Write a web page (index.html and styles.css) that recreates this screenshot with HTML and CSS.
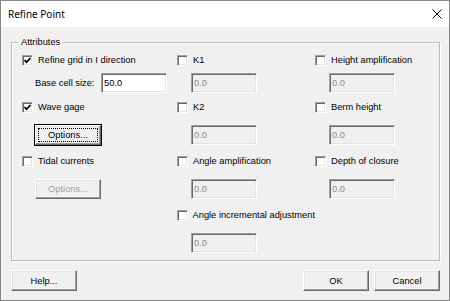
FILE: index.html
```html
<!DOCTYPE html>
<html lang="en">
<head>
    <meta charset="UTF-8">
    <title>Refine Point</title>
    <link rel="stylesheet" href="styles.css">
</head>
<body>
    <div class="window">
        <div class="titlebar">
            <span class="title">Refine Point</span>
            <svg class="close" width="10" height="10" viewBox="0 0 10 10">
                <path d="M0.5 0.5 L9.5 9.5 M9.5 0.5 L0.5 9.5" stroke="#000" stroke-width="1" fill="none"/>
            </svg>
        </div>

        <div class="client">
            <fieldset class="group">
                <legend>Attributes</legend>
                <div class="grid">
                    <!-- row 1 -->
                    <label class="check"><span class="box checked"><svg width="9" height="9" viewBox="0 0 9 9"><path d="M1.5 4 L3.5 6.2 L7.5 2" stroke="#000" stroke-width="1.7" fill="none"/></svg></span>Refine grid in I direction</label>
                    <label class="check"><span class="box"></span>K1</label>
                    <label class="check"><span class="box"></span>Height amplification</label>

                    <!-- row 2 -->
                    <div class="field"><span class="field-label">Base cell size:</span><input class="edit" type="text" value="50.0"></div>
                    <input class="edit indent" type="text" value="0.0" disabled>
                    <input class="edit indent" type="text" value="0.0" disabled>

                    <!-- row 3 -->
                    <label class="check"><span class="box checked"><svg width="9" height="9" viewBox="0 0 9 9"><path d="M1.5 4 L3.5 6.2 L7.5 2" stroke="#000" stroke-width="1.7" fill="none"/></svg></span>Wave gage</label>
                    <label class="check"><span class="box"></span>K2</label>
                    <label class="check"><span class="box"></span>Berm height</label>

                    <!-- row 4 -->
                    <button class="btn small default"><span class="focus">Options...</span></button>
                    <input class="edit indent" type="text" value="0.0" disabled>
                    <input class="edit indent" type="text" value="0.0" disabled>

                    <!-- row 5 -->
                    <label class="check"><span class="box"></span>Tidal currents</label>
                    <label class="check"><span class="box"></span>Angle amplification</label>
                    <label class="check"><span class="box"></span>Depth of closure</label>

                    <!-- row 6 -->
                    <button class="btn small" disabled>Options...</button>
                    <input class="edit indent" type="text" value="0.0" disabled>
                    <input class="edit indent" type="text" value="0.0" disabled>

                    <!-- row 7 -->
                    <div></div>
                    <label class="check"><span class="box"></span>Angle incremental adjustment</label>
                    <div></div>

                    <!-- row 8 -->
                    <div></div>
                    <input class="edit indent" type="text" value="0.0" disabled>
                    <div></div>
                </div>
            </fieldset>

            <div class="footer">
                <button class="btn">Help...</button>
                <div class="spacer"></div>
                <button class="btn">OK</button>
                <button class="btn">Cancel</button>
            </div>
        </div>
    </div>
</body>
</html>
```

FILE: styles.css
```css
body {
    margin: 0;
    padding: 0;
    font-family: 'Liberation Sans', Arial, sans-serif;
    font-size: 9.3px;
    color: #000;
}

.window {
    width: 450px;
    height: 301px;
    box-sizing: border-box;
    border: 1px solid #858585;
    background-color: #f0f0f0;
    display: flex;
    flex-direction: column;
}

.titlebar {
    height: 26px;
    background-color: #fff;
    display: flex;
    align-items: center;
    padding: 0 7px 0 7px;
    flex-shrink: 0;
}

.title {
    font-family: 'Noto Sans', 'Open Sans', sans-serif;
    font-size: 10px;
    flex: 1;
}

.close {
    display: block;
}

.client {
    flex: 1;
    display: flex;
    flex-direction: column;
    padding: 9px 9px 0 10px;
}

.group {
    margin: 0;
    height: 225px;
    box-sizing: border-box;
    padding: 5px 0 0 10px;
    border: 1px solid #bcbcbc;
    box-shadow: inset 1px 1px 0 #fff, 1px 1px 0 #fff;
}

.group legend {
    margin-left: -4px;
    padding: 0 3px;
    line-height: 12px;
}

.grid {
    display: grid;
    grid-template-columns: 155px 138px 1fr;
    grid-template-rows: 20px 27px 25px 29px 25px 29px 25px 20px;
    align-items: start;
}

.check {
    display: flex;
    align-items: center;
    height: 14px;
    white-space: nowrap;
}

.box {
    width: 11px;
    height: 11px;
    box-sizing: border-box;
    background-color: #fff;
    border: 1px solid;
    border-color: #a0a0a0 #fff #fff #a0a0a0;
    box-shadow: inset 1px 1px 0 #696969, inset -1px -1px 0 #e3e3e3;
    margin-right: 5px;
    display: flex;
    align-items: center;
    justify-content: center;
}

.box svg {
    display: block;
}

.field {
    display: flex;
    align-items: center;
    padding-left: 13px;
}

.field-label {
    width: 66px;
}

.edit {
    width: 66px;
    height: 20px;
    box-sizing: border-box;
    margin: 0;
    padding: 0 2px;
    font-family: inherit;
    font-size: 9.3px;
    color: #000;
    background-color: #fff;
    border: 1px solid;
    border-color: #a0a0a0 #fff #fff #a0a0a0;
    box-shadow: inset 1px 1px 0 #696969, inset -1px -1px 0 #e3e3e3;
    outline: none;
}

.edit:disabled {
    background-color: #f0f0f0;
    color: #8a8a8a;
}

.indent {
    margin-left: 14px;
}

.btn {
    width: 66px;
    height: 21px;
    box-sizing: border-box;
    margin: 0;
    padding: 0;
    font-family: inherit;
    font-size: 9.3px;
    color: #000;
    background-color: #f0f0f0;
    border: 1px solid;
    border-color: #fff #696969 #696969 #fff;
    box-shadow: inset -1px -1px 0 #a0a0a0, inset 1px 1px 0 #e3e3e3;
    display: flex;
    align-items: center;
    justify-content: center;
}

.btn.small {
    height: 20px;
    margin-left: 13px;
}

.btn.default {
    outline: 1px solid #000;
}

.btn .focus {
    align-self: stretch;
    flex: 1;
    margin: 2px;
    border: 1px dotted #000;
    display: flex;
    align-items: center;
    justify-content: center;
}

.btn:disabled {
    color: #a0a0a0;
}

.footer {
    display: flex;
    gap: 5px;
    margin-top: 9px;
}

.spacer {
    flex: 1;
}
```
